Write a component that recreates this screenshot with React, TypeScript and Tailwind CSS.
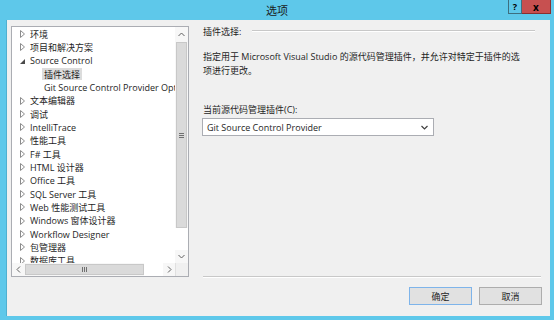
import React from "react";

const FONT = '"Open Sans", "Noto Sans CJK SC", sans-serif';

type Item = { label: string; level: 0 | 1; state: "closed" | "open" | "none"; selected?: boolean };

const items: Item[] = [
  { label: "环境", level: 0, state: "closed" },
  { label: "项目和解决方案", level: 0, state: "closed" },
  { label: "Source Control", level: 0, state: "open" },
  { label: "插件选择", level: 1, state: "none", selected: true },
  { label: "Git Source Control Provider Options", level: 1, state: "none" },
  { label: "文本编辑器", level: 0, state: "closed" },
  { label: "调试", level: 0, state: "closed" },
  { label: "IntelliTrace", level: 0, state: "closed" },
  { label: "性能工具", level: 0, state: "closed" },
  { label: "F# 工具", level: 0, state: "closed" },
  { label: "HTML 设计器", level: 0, state: "closed" },
  { label: "Office 工具", level: 0, state: "closed" },
  { label: "SQL Server 工具", level: 0, state: "closed" },
  { label: "Web 性能测试工具", level: 0, state: "closed" },
  { label: "Windows 窗体设计器", level: 0, state: "closed" },
  { label: "Workflow Designer", level: 0, state: "closed" },
  { label: "包管理器", level: 0, state: "closed" },
  { label: "数据库工具", level: 0, state: "closed" },
];

function Arrow({ state }: { state: Item["state"] }) {
  if (state === "closed")
    return (
      <svg width="5" height="8" viewBox="0 0 5 8" className="shrink-0">
        <polygon points="0.5,0.5 4.5,4 0.5,7.5" fill="none" stroke="#8c8c8c" strokeWidth="1" />
      </svg>
    );
  if (state === "open")
    return (
      <svg width="5" height="8" viewBox="0 0 5 8" className="shrink-0">
        <polygon points="5,2 5,7 0,7" fill="#4a4a4a" />
      </svg>
    );
  return <span className="w-[5px] shrink-0" />;
}

function TreeRow({ item }: { item: Item }) {
  return (
    <div className="flex h-[13.33px] items-center whitespace-nowrap">
      {item.level === 0 ? (
        <>
          <span className="ml-[8px] mr-[5px] flex items-center">
            <Arrow state={item.state} />
          </span>
          <span className="text-[9px] leading-none text-[#1e1e1e]">{item.label}</span>
        </>
      ) : (
        <span
          className={
            "ml-[30px] px-[2px] h-[12.5px] flex items-center text-[9px] leading-none text-[#1e1e1e] " +
            (item.selected ? "bg-[#dcdcdc]" : "")
          }
        >
          {item.label}
        </span>
      )}
    </div>
  );
}

function Tree() {
  return (
    <div className="flex h-[251px] w-[178px] flex-col border border-[#abadb3] bg-white">
      <div className="flex min-h-0 flex-1">
        <div className="min-w-0 flex-1 overflow-hidden pt-[0.5px]">
          {items.map((it, i) => (
            <TreeRow key={i} item={it} />
          ))}
        </div>
        {/* vertical scrollbar */}
        <div className="flex w-[13px] flex-col bg-[#f7f7f7]">
          <div className="flex h-[15px] items-center justify-center">
            <svg width="7" height="5" viewBox="0 0 7 5">
              <polyline points="0.5,4 3.5,1 6.5,4" fill="none" stroke="#606060" strokeWidth="1" />
            </svg>
          </div>
          <div className="mx-[1px] flex h-[186px] items-center justify-center border border-[#c8c8c8] bg-[#dadada]">
            <div className="flex flex-col gap-[1px]">
              <div className="h-px w-[5px] bg-[#707070]" />
              <div className="h-px w-[5px] bg-[#707070]" />
              <div className="h-px w-[5px] bg-[#707070]" />
            </div>
          </div>
          <div className="flex-1 bg-white" />
          <div className="flex h-[13px] items-center justify-center">
            <svg width="7" height="5" viewBox="0 0 7 5">
              <polyline points="0.5,1 3.5,4 6.5,1" fill="none" stroke="#606060" strokeWidth="1" />
            </svg>
          </div>
        </div>
      </div>
      {/* horizontal scrollbar */}
      <div className="flex h-[13px] bg-[#f7f7f7]">
        <div className="flex w-[13px] items-center justify-center">
          <svg width="5" height="7" viewBox="0 0 5 7">
            <polyline points="4,0.5 1,3.5 4,6.5" fill="none" stroke="#606060" strokeWidth="1" />
          </svg>
        </div>
        <div className="my-[1px] flex w-[119px] items-center justify-center border border-[#c8c8c8] bg-[#dadada]">
          <div className="flex gap-[1px]">
            <div className="h-[5px] w-px bg-[#707070]" />
            <div className="h-[5px] w-px bg-[#707070]" />
            <div className="h-[5px] w-px bg-[#707070]" />
          </div>
        </div>
        <div className="flex-1 bg-white" />
        <div className="flex w-[12px] items-center justify-center">
          <svg width="5" height="7" viewBox="0 0 5 7">
            <polyline points="1,0.5 4,3.5 1,6.5" fill="none" stroke="#606060" strokeWidth="1" />
          </svg>
        </div>
        <div className="w-[13px] border-l border-[#e0e0e0] bg-[#f0f0f0]" />
      </div>
    </div>
  );
}

function Button({ label, focused }: { label: string; focused?: boolean }) {
  return (
    <div
      className={
        "flex h-[18px] w-[63px] items-center justify-center border bg-[#e1e1e1] text-[9px] leading-none text-[#1e1e1e] " +
        (focused ? "border-[#7eb4ea]" : "border-[#adadad]")
      }
    >
      {label}
    </div>
  );
}

export default function App() {
  return (
    <div
      className="flex h-[320px] w-[554px] flex-col bg-[#5ec8ea]"
      style={{ fontFamily: FONT }}
    >
      {/* title bar */}
      <div className="relative flex h-[20px] items-center justify-center">
        <span className="text-[11px] leading-none text-[#1a1a1a]">选项</span>
        <div className="absolute right-[3px] top-0 flex h-[14px]">
          <div className="flex w-[14px] items-center justify-center border border-[#3d6f80] border-t-0 text-[9px] font-bold leading-none text-black">
            ?
          </div>
          <div className="flex w-[29px] items-center justify-center border border-l-0 border-t-0 border-[#8b2f2f] bg-[#c75050] text-[10px] font-bold leading-none text-black">
            x
          </div>
        </div>
      </div>
      {/* client area */}
      <div className="ml-[6px] mr-[4px] mb-[4px] flex flex-1 border-l border-[#4fb0d0] bg-[#f0f0f0]">
        <div className="ml-[4px] mt-[6px]">
          <Tree />
        </div>
        <div className="ml-[14px] flex w-[339px] flex-col pb-[11px] text-[9px] leading-none text-[#1e1e1e]">
          <div className="mt-[5px] flex h-[12px] items-center">
            <span>插件选择:</span>
            <div className="ml-[11px] mr-[7px] flex-1 border-t border-b border-t-[#c8c8c8] border-b-white" />
          </div>
          <div className="mt-[13px] whitespace-nowrap leading-[14px]">
            指定用于 Microsoft Visual Studio 的源代码管理插件，并允许对特定于插件的选
            <br />
            项进行更改。
          </div>
          <div className="mt-[24px] flex h-[14px] items-center">当前源代码管理插件(C):</div>
          <div className="-ml-px mt-[2px] flex h-[18px] w-[232px] items-center justify-between border border-[#abadb3] bg-white pl-[4px] pr-[5px]">
            <span>Git Source Control Provider</span>
            <svg width="7" height="5" viewBox="0 0 7 5">
              <polyline points="0.5,1 3.5,4 6.5,1" fill="none" stroke="#404040" strokeWidth="1.2" />
            </svg>
          </div>
          <div className="flex-1" />
          <div className="mr-px border-t border-b border-t-[#c8c8c8] border-b-white" />
          <div className="mt-[9px] flex justify-end gap-[7px]">
            <Button label="确定" focused />
            <Button label="取消" />
          </div>
        </div>
      </div>
    </div>
  );
}
